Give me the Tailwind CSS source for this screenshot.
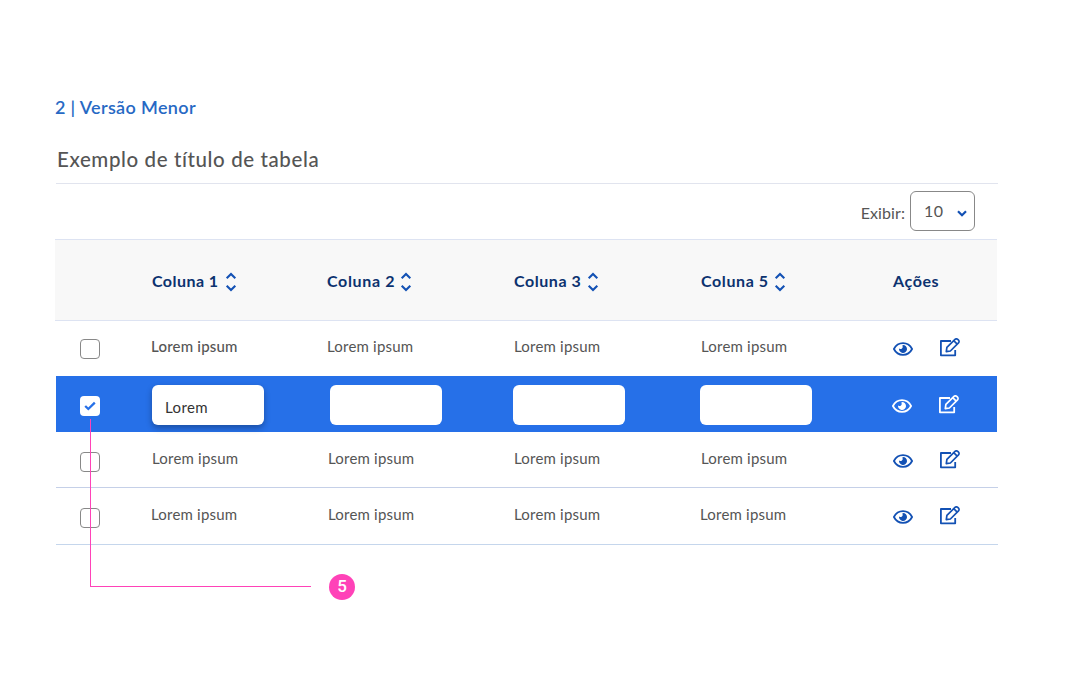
<!DOCTYPE html>
<html lang="pt-BR">
<head>
<meta charset="utf-8">
<title>Tabela</title>
<script src="https://cdn.jsdelivr.net/npm/@tailwindcss/browser@4"></script>
</head>
<body class="bg-white">
<svg class="hidden">
  <symbol id="sort" viewBox="0 0 12 20"><path d="M1.7 6.3 6 2l4.300 4.300M1.700 13.700 6 18l4.300-4.300" fill="none" stroke="currentColor" stroke-width="2.100"/></symbol>
  <symbol id="eye" viewBox="0 0 20 14"><path d="M.9 7C2.800 3.300 6 1.100 10 1.100S17.200 3.300 19.100 7C17.200 10.700 14 12.900 10 12.900S2.800 10.700.9 7Z" fill="none" stroke="currentColor" stroke-width="1.800" stroke-linejoin="round"/><path d="M10 3a4 4 0 1 1-3.900 3.200c.5.700 1.300 1 2.100.8 1.200-.3 1.900-1.500 1.300-2.900-.1-.4.100-1.100.5-1.100Z" fill="currentColor"/></symbol>
  <symbol id="edit" viewBox="0 0 20 19"><path d="M11 3H.9V17.300H15.200V12" fill="none" stroke="currentColor" stroke-width="1.800" stroke-linejoin="round"/><path d="m6.300 13.600.6-4.200 8.100-8a1.900 1.900 0 0 1 2.700 0l.8.800a1.900 1.900 0 0 1 0 2.700l-8.100 8.100Zm7.400-10.900 3.500 3.500" fill="none" stroke="currentColor" stroke-width="1.700" stroke-linejoin="round"/></symbol>
</svg>
<main class="relative w-[1067px] h-[693px] pt-[95px] pl-[55px] font-['Lato','Liberation_Sans',sans-serif] text-[#555]">
  <h2 class="h-6 text-[18px] leading-6 font-semibold tracking-[0.35px] text-[#2769c4]">2 | Versão Menor</h2>
  <section class="w-[943px] mt-[26px]">
    <h1 class="h-[39px] ml-px pl-px border-b border-[#e1e4ee] text-[20.5px] leading-7 font-medium tracking-[0.6px]">Exemplo de título de tabela</h1>
    <div class="h-[55px] pt-[7px] pr-[23px] flex justify-end">
      <span class="mt-3 mr-[5px] text-[16px] leading-5 tracking-[0.1px]">Exibir:</span>
      <div class="w-[65px] h-10 rounded-[6px] border border-[#888] flex pl-[13px] pt-[9px]">
        <span class="w-[33px] text-[16px] leading-5 tracking-[0.4px]">10</span>
        <svg class="w-[10px] h-[7px] mt-[9px]" viewBox="0 0 10 7"><path d="m1 1.300 4 4 4-4" fill="none" stroke="#1351b4" stroke-width="2.200"/></svg>
      </div>
    </div>
    <div class="w-[942px] h-[81px] bg-[#f8f8f8] border-t border-[#dde3f2] grid grid-cols-[97px_175px_187px_187px_192px_1fr] items-center pt-[3px] text-[16px] leading-5 font-bold text-[#0c326f]">
      <span></span>
      <div class="flex items-center"><span class="w-[73px] pb-0.5 tracking-[0.45px]">Coluna 1</span><svg class="w-3 h-5 text-[#1351b4]"><use href="#sort"/></svg></div>
      <div class="flex items-center"><span class="w-[73px] pb-0.5 tracking-[0.65px]">Coluna 2</span><svg class="w-3 h-5 text-[#1351b4]"><use href="#sort"/></svg></div>
      <div class="flex items-center"><span class="w-[73px] pb-0.5 tracking-[0.55px]">Coluna 3</span><svg class="w-3 h-5 text-[#1351b4]"><use href="#sort"/></svg></div>
      <div class="flex items-center"><span class="w-[73px] pb-0.5 tracking-[0.6px]">Coluna 5</span><svg class="w-3 h-5 text-[#1351b4]"><use href="#sort"/></svg></div>
      <span class="pb-0.5 tracking-[0.6px]">Ações</span>
    </div>
    <div class="h-14 w-[942px] border-t border-[#dde3f2] grid grid-cols-[96px_176px_187px_187px_192px_1fr] text-[15px] leading-5 tracking-[0.2px]">
      <span class="size-5 mt-[18px] ml-[25px] rounded-[4px] border border-[#888]"></span>
      <span class="mt-[15px] font-medium">Lorem ipsum</span><span class="mt-[15px]">Lorem ipsum</span><span class="mt-[15px]">Lorem ipsum</span><span class="mt-[15px]">Lorem ipsum</span>
      <div class="flex text-[#1351b4]"><svg class="w-5 h-[14px] mt-[21px]"><use href="#eye"/></svg><svg class="w-5 h-[19px] mt-[17px] ml-[27px]"><use href="#edit"/></svg></div>
    </div>
    <div class="h-14 ml-px w-[941px] bg-[#2670e8] grid grid-cols-[96px_178px_183px_187px_192px_1fr] text-white">
      <span class="size-5 mt-5 ml-6 rounded-[4px] bg-white flex items-center justify-center"><svg class="w-3 h-[10px]" viewBox="0 0 12 10"><path d="m1.200 5 3.100 3L10.800 1.600" fill="none" stroke="#2670e8" stroke-width="2.300"/></svg></span>
      <span class="w-28 h-10 mt-[9px] rounded-[6px] bg-white text-[#333] text-[15px] leading-5 tracking-[0.4px] pl-[13px] pt-3 shadow-[0_3px_6px_rgba(0,0,0,0.3)]">Lorem</span>
      <span class="w-28 h-10 mt-[9px] rounded-[6px] bg-white"></span><span class="w-28 h-10 mt-[9px] rounded-[6px] bg-white"></span><span class="w-28 h-10 mt-[9px] rounded-[6px] bg-white"></span>
      <div class="flex"><svg class="w-5 h-[14px] mt-[23px]"><use href="#eye"/></svg><svg class="w-5 h-[19px] mt-[19px] ml-[27px]"><use href="#edit"/></svg></div>
    </div>
    <div class="h-14 ml-px w-[942px] border-b border-[#c5d0e8] grid grid-cols-[96px_176px_186px_187px_192px_1fr] text-[15px] leading-5 tracking-[0.2px]">
      <span class="size-5 mt-[20px] ml-6 rounded-[4px] border border-[#888]"></span>
      <span class="mt-4">Lorem ipsum</span><span class="mt-4">Lorem ipsum</span><span class="mt-4">Lorem ipsum</span><span class="mt-4">Lorem ipsum</span>
      <div class="flex text-[#1351b4]"><svg class="w-5 h-[14px] mt-[22px]"><use href="#eye"/></svg><svg class="w-5 h-[19px] mt-[18px] ml-[27px]"><use href="#edit"/></svg></div>
    </div>
    <div class="h-[57px] ml-px w-[942px] border-b border-[#c5d6ec] grid grid-cols-[95px_177px_186px_186px_193px_1fr] text-[15px] leading-5 tracking-[0.2px]">
      <span class="size-5 mt-[20px] ml-6 rounded-[4px] border border-[#888]"></span>
      <span class="mt-4">Lorem ipsum</span><span class="mt-4">Lorem ipsum</span><span class="mt-4">Lorem ipsum</span><span class="mt-4">Lorem ipsum</span>
      <div class="flex text-[#1351b4]"><svg class="w-5 h-[14px] mt-[22px]"><use href="#eye"/></svg><svg class="w-5 h-[19px] mt-[18px] ml-[27px]"><use href="#edit"/></svg></div>
    </div>
  </section>
  <div class="absolute left-[90px] top-[419px] w-[221px] h-[168px] border-l border-b border-[#ff42b8]"></div>
  <div class="absolute left-[329px] top-[574px] size-[26px] rounded-full bg-[#ff42b8] text-white font-['Roboto'] font-medium text-[17px] leading-[25px] text-center">5</div>
</main>
</body>
</html>
